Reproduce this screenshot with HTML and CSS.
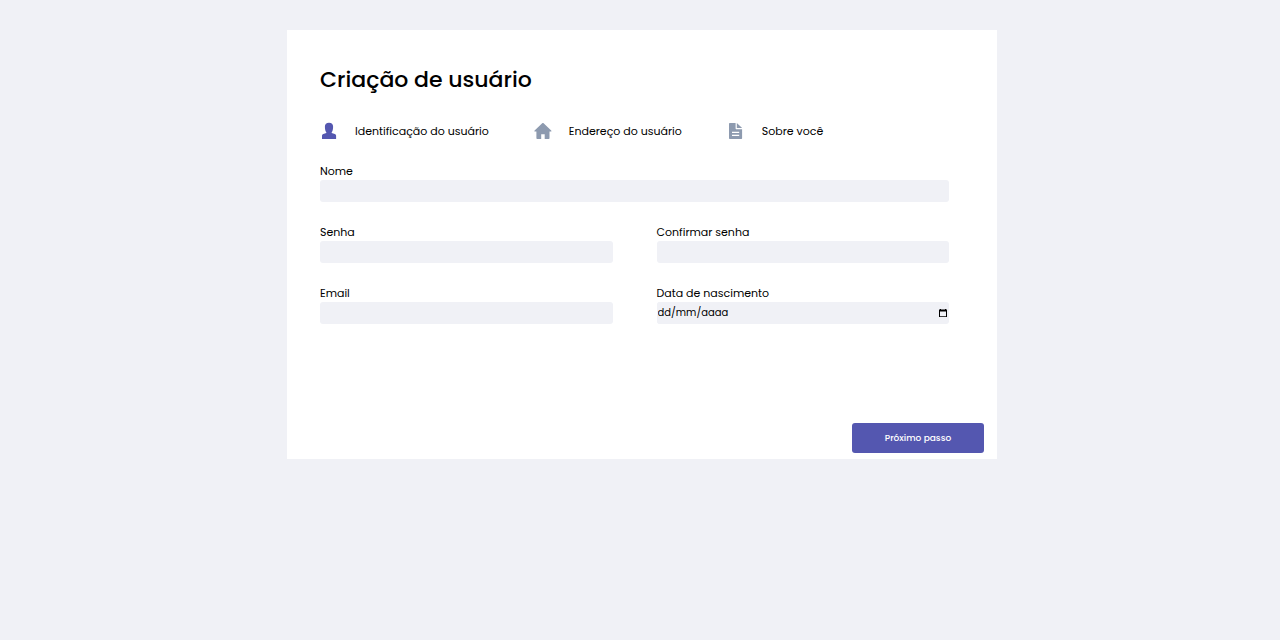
FILE: index.html
```html
<!DOCTYPE html>
<html lang="pt-BR">
<head>
<meta charset="utf-8">
<meta name="viewport" content="width=device-width, initial-scale=1">
<title>Criação de usuário</title>
<link rel="stylesheet" href="styles.css">
</head>
<body>
<main class="page">
  <form class="card">
    <h1 class="title">Criação de usuário</h1>
    <ol class="steps">
      <li class="step step-active">
        <svg class="step-icon" viewBox="0 0 18 18" aria-hidden="true"><path d="M9 .8c2.600 0 4.100 1.400 4.100 3.700 0 2.400-.3 4.500-1.400 5.700v.8l3.100 1c.8.300 1.300.9 1.300 1.700V17H2v-3.300c0-.8.5-1.400 1.300-1.700l3-1v-.8C5.200 9 4.900 6.900 4.900 4.500 4.900 2.200 6.400.8 9 .8z"/></svg>
        <span>Identificação do usuário</span>
      </li>
      <li class="step">
        <svg class="step-icon" viewBox="0 0 18 18" aria-hidden="true"><path d="M8.200 1.300c.4-.4 1-.4 1.400 0l7.600 7.200c.5.500.3 1.100-.4 1.100h-1.300v6.600c0 .5-.3.800-.8.800h-4v-4.800H7.200V17h-4c-.5 0-.8-.3-.8-.8V9.600H1c-.7 0-.9-.6-.4-1.100z"/></svg>
        <span>Endereço do usuário</span>
      </li>
      <li class="step">
        <svg class="step-icon" viewBox="0 0 18 18" aria-hidden="true"><path fill-rule="evenodd" d="M3 .9h5.600v5.300c0 .6.400 1 1 1h5.500V16c0 .6-.4 1-1 1H3c-.6 0-1-.4-1-1V1.900c0-.6.400-1 1-1zM5 9.700v1.200h7.200V9.700zM5 12.700v1.200h7.200v-1.200z"/><path d="M9.800.9l5.300 5.100H9.800z"/></svg>
        <span>Sobre você</span>
      </li>
    </ol>
    <div class="fields">
      <div class="field field-wide">
        <label for="nome">Nome</label>
        <input class="input" id="nome" type="text">
      </div>
      <div class="field">
        <label for="senha">Senha</label>
        <input class="input" id="senha" type="password">
      </div>
      <div class="field">
        <label for="confirmar">Confirmar senha</label>
        <input class="input" id="confirmar" type="password">
      </div>
      <div class="field">
        <label for="email">Email</label>
        <input class="input" id="email" type="email">
      </div>
      <div class="field">
        <label for="nascimento">Data de nascimento</label>
        <div class="date">
          <input class="input" id="nascimento" type="text" inputmode="numeric" placeholder="dd/mm/aaaa">
          <button class="date-button" type="button" aria-label="Abrir calendário">
            <svg class="date-icon" viewBox="0 0 10 10" aria-hidden="true"><path fill-rule="evenodd" d="M2 1h1v.6h4V1h1v.6h1V9H1V1.600h1zM2 3.600v4.600h6V3.600z"/></svg>
          </button>
        </div>
      </div>
    </div>
    <div class="actions">
      <button class="next" type="submit">Próximo passo</button>
    </div>
  </form>
</main>
</body>
</html>
```
FILE: styles.css
```css
* {
  box-sizing: border-box;
}

body {
  margin: 0;
  background: #f0f1f6;
  color: #000;
  font-family: Poppins, Inter, "Open Sans", sans-serif;
  font-size: 11px;
}

.page {
  padding: 30px 14px 30px 18px;
}

.card {
  max-width: 710px;
  margin: 0 auto;
  padding: 33px 13px 6px 33px;
  background: #fff;
}

.title {
  margin: 0;
  font-size: 22px;
  font-weight: 500;
  line-height: 34px;
}

.steps {
  display: flex;
  flex-wrap: wrap;
  gap: 8px 45px;
  margin: 25px 0 23px;
  padding: 0;
  list-style: none;
}

.step {
  display: flex;
  align-items: center;
  gap: 17px;
  line-height: 18px;
}

.step-icon {
  width: 18px;
  height: 18px;
  fill: #8d9aaf;
}

.step-active .step-icon {
  fill: #5457b0;
}

.fields {
  display: grid;
  grid-template-columns: 1fr 1fr;
  gap: 22px 44px;
  padding-right: 35px;
}

.field {
  display: flex;
  flex-direction: column;
  line-height: 17px;
}

.field-wide {
  grid-column: 1 / -1;
}

.input {
  width: 100%;
  height: 22px;
  padding: 1px;
  border: 0;
  border-radius: 3px;
  background: #f0f1f6;
  color: #000;
  font: inherit;
  font-size: 10px;
}

.input::placeholder {
  color: #000;
  opacity: 1;
}

.date {
  display: flex;
  align-items: center;
  border-radius: 3px;
  background: #f0f1f6;
}

.date-button {
  display: flex;
  padding: 0 1px;
  border: 0;
  background: none;
}

.date-icon {
  width: 10px;
  height: 10px;
}

.actions {
  display: flex;
  justify-content: flex-end;
  margin-top: 99px;
}

.next {
  width: 132px;
  height: 30px;
  border: 0;
  border-radius: 3px;
  background: #5457b0;
  color: #fff;
  font: inherit;
  font-size: 9px;
  font-weight: 500;
}
```
